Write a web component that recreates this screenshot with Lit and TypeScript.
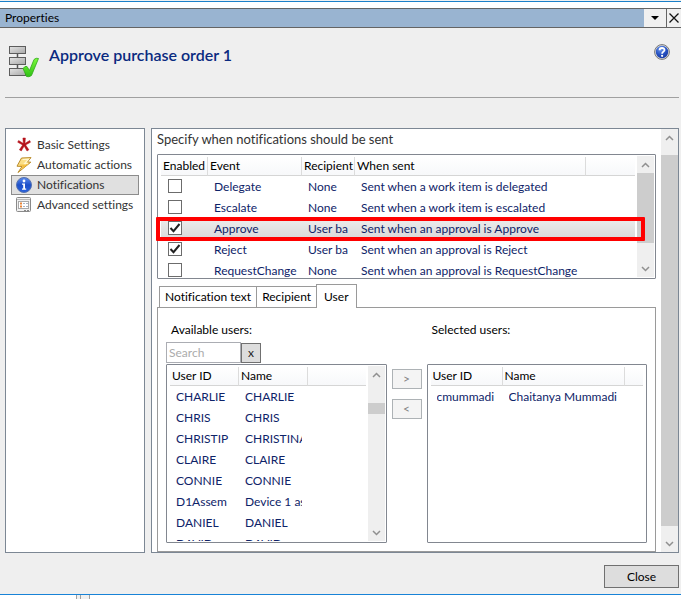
import { LitElement, html, css, svg, nothing } from "lit";
import { customElement, property, state } from "lit/decorators.js";
import { classMap } from "lit/directives/class-map.js";

interface NotificationEvent {
  name: string;
  recipient: string;
  when: string;
  enabled: boolean;
}

interface User {
  id: string;
  name: string;
}

const base = css`
  * {
    box-sizing: border-box;
  }
  button,
  input {
    font: inherit;
    font-variant-ligatures: none;
    color: inherit;
    margin: 0;
    border-radius: 0;
  }
`;

@customElement("scroll-bar")
export class ScrollBar extends LitElement {
  /** Share of the track above the thumb, in percent. */
  @property({ type: Number }) start = 0;
  /** Share of the track that the thumb fills, in percent. */
  @property({ type: Number }) size = 50;

  static styles = [
    base,
    css`
      :host {
        display: flex;
        flex-direction: column;
        flex: none;
        width: 17px;
        background: #efefef;
      }
      .arrow {
        flex: none;
        height: 17px;
        display: flex;
        align-items: center;
        justify-content: center;
      }
      :host([large]) .track {
        margin: 9px 0;
      }
      .track {
        flex: 1;
        min-height: 0;
      }
      .thumb {
        background: #cdcdcd;
      }
      path {
        fill: none;
        stroke: #909090;
        stroke-width: 1.5;
      }
    `,
  ];

  render() {
    return html`
      <div class="arrow"><svg width="9" height="6"><path d="M1 5L4.5 1.5L8 5" /></svg></div>
      <div class="track">
        <div style="height:${this.start}%"></div>
        <div class="thumb" style="height:${this.size}%"></div>
      </div>
      <div class="arrow"><svg width="9" height="6"><path d="M1 1L4.5 4.5L8 1" /></svg></div>
    `;
  }
}

const stepsIcon = svg`
  <svg width="32" height="34" viewBox="0 0 32 34" aria-hidden="true">
    <defs>
      <linearGradient id="box" x1="0" y1="0" x2="1" y2="1">
        <stop offset="0" stop-color="#e4e4e4" /><stop offset="1" stop-color="#a8a8a8" />
      </linearGradient>
      <linearGradient id="tick" x1="0" y1="0" x2="0" y2="1">
        <stop offset="0" stop-color="#7dfb3c" /><stop offset="1" stop-color="#2fc015" />
      </linearGradient>
    </defs>
    <path d="M9.500 9V24" stroke="#555" stroke-width="1.500" />
    <g fill="url(#box)" stroke="#5c5c5c">
      <rect x="1.500" y="2.500" width="16" height="7" />
      <rect x="1.500" y="13.500" width="16" height="7" />
      <rect x="1.500" y="24.500" width="16" height="7" />
    </g>
    <path d="M15 24.500Q17 21.500 19 22.500L21.500 26.500L26 15.500Q28 13.500 30.500 14.500L23.500 31.500Q21 33.500 18.500 32.500Z"
      fill="url(#tick)" stroke="#31a81c" stroke-width=".8" stroke-linejoin="round" />
  </svg>`;

const helpIcon = svg`
  <svg width="16" height="16" viewBox="0 0 16 16" aria-hidden="true">
    <defs>
      <radialGradient id="help" cx=".4" cy=".25" r=".8">
        <stop offset="0" stop-color="#6f9af0" /><stop offset=".6" stop-color="#2550c0" /><stop offset="1" stop-color="#1a3aa0" />
      </radialGradient>
    </defs>
    <circle cx="8" cy="8" r="7.400" fill="#ddd" stroke="#777" stroke-width="1" />
    <circle cx="8" cy="8" r="6.200" fill="url(#help)" />
    <path d="M5.600 6.300C5.600 3.300 10.500 3.300 10.500 6C10.500 7.700 8.100 7.600 8.100 9.700" fill="none" stroke="#fff" stroke-width="1.800" />
    <circle cx="8.100" cy="11.800" r="1.100" fill="#fff" />
  </svg>`;

const asterisk = svg`
  <svg width="16" height="16" viewBox="0 0 16 16" aria-hidden="true">
    <g fill="#b5121b" stroke="#b5121b" stroke-width=".5" stroke-linejoin="round">
      <path d="M6.900 1H9.400L8.800 8H7.500Z" />
      <path d="M1.700 5.200L2.600 3.500L8.700 7.300L8 8.700Z" />
      <path d="M14.500 5.200L13.700 3.500L7.500 7.300L8.200 8.700Z" />
      <path d="M7.300 7L8.800 7.900L5.300 14L3.400 12.800Z" />
      <path d="M9 7L7.500 7.900L11 14L12.900 12.800Z" />
    </g>
  </svg>`;

const bolt = svg`
  <svg width="16" height="16" viewBox="0 0 16 16" aria-hidden="true">
    <path d="M5.500 1L15 .6L11.500 5L14.800 5.200L2 15.500L6 9.500L1 9.200Z" fill="#fbdf86" stroke="#b98b2c" stroke-linejoin="round" />
    <path d="M6.500 2.500L12.500 2.200L8.600 6.500L12 6.700" fill="none" stroke="#fff6cf" stroke-width="1.200" />
    <path d="M11.500 7L6 11.500L8 8.300L3.500 8" fill="none" stroke="#f3bc3e" stroke-width="1.200" />
  </svg>`;

const info = svg`
  <svg width="16" height="16" viewBox="0 0 16 16" aria-hidden="true">
    <defs>
      <linearGradient id="info" x1="0" y1="0" x2="0" y2="1">
        <stop offset="0" stop-color="#5b8cf0" /><stop offset=".5" stop-color="#1d4fc8" /><stop offset="1" stop-color="#2a63dd" />
      </linearGradient>
    </defs>
    <circle cx="8" cy="8" r="7.500" fill="url(#info)" stroke="#5672ae" />
    <circle cx="8" cy="4" r="1.400" fill="#fff" />
    <path d="M6 6.500H9V11.500H10.200V12.700H6V11.500H7.200V7.700H6Z" fill="#fff" />
  </svg>`;

const form = svg`
  <svg width="16" height="16" viewBox="0 0 16 16" aria-hidden="true">
    <rect x=".5" y=".5" width="14" height="14" rx="1" fill="#f0f0f0" stroke="#8a8a8a" />
    <path d="M1 2.500H14" stroke="#b9b9b9" />
    <rect x="2.500" y="4.500" width="10" height="7" fill="#fff" stroke="#a8a8a8" />
    <path d="M4 6.500H6M4 9.500H6" stroke="#e8863a" stroke-width="2" />
    <path d="M7 6.500H9M10 6.500H12M7 9.500H9M10 9.500H12" stroke="#a9b4c4" />
    <path d="M8 13.500H10M11 13.500H13" stroke="#888" />
  </svg>`;

@customElement("app-root")
export class AppRoot extends LitElement {
  @state() private section = "Notifications";
  @state() private tab = "User";

  private sections = [
    { label: "Basic Settings", icon: asterisk },
    { label: "Automatic actions", icon: bolt },
    { label: "Notifications", icon: info },
    { label: "Advanced settings", icon: form },
  ];

  private tabs = ["Notification text", "Recipient", "User"];

  private events: NotificationEvent[] = [
    { name: "Delegate", recipient: "None", when: "Sent when a work item is delegated", enabled: false },
    { name: "Escalate", recipient: "None", when: "Sent when a work item is escalated", enabled: false },
    { name: "Approve", recipient: "User ba", when: "Sent when an approval is Approve", enabled: true },
    { name: "Reject", recipient: "User ba", when: "Sent when an approval is Reject", enabled: true },
    { name: "RequestChange", recipient: "None", when: "Sent when an approval is RequestChange", enabled: false },
  ];

  private available: User[] = [
    { id: "CHARLIE", name: "CHARLIE" },
    { id: "CHRIS", name: "CHRIS" },
    { id: "CHRISTIP", name: "CHRISTINA" },
    { id: "CLAIRE", name: "CLAIRE" },
    { id: "CONNIE", name: "CONNIE" },
    { id: "D1Assem", name: "Device 1 as" },
    { id: "DANIEL", name: "DANIEL" },
    { id: "DAVID", name: "DAVID" },
  ];

  private selected: User[] = [{ id: "cmummadi", name: "Chaitanya Mummadi" }];

  static styles = [
    base,
    css`
      :host {
        display: flex;
        flex-direction: column;
        height: 100vh;
        overflow: hidden;
        background: #fff;
        color: #000;
        font: 12px/16px Lato, "Open Sans", sans-serif;
        font-variant-ligatures: none;
      }
      .top-edge {
        flex: none;
        height: 8px;
        border-top: 1px solid #f0f0f0;
        background: linear-gradient(#1a7fc8 1px, #fff 1px);
      }
      .titlebar {
        flex: none;
        display: flex;
        height: 20px;
        border: solid #646464;
        border-width: 1px 0;
        background: #99b4d1;
      }
      .titlebar-text {
        flex: 1;
        padding: 1px 5px;
      }
      .title-button {
        width: 22px;
        padding: 0;
        border: 0;
        background: #f0f0f0;
        display: flex;
        align-items: center;
        justify-content: center;
      }
      .title-close {
        width: 15px;
        border-left: 1px solid #646464;
      }
      .dialog {
        flex: 1;
        min-height: 0;
        display: flex;
        flex-direction: column;
        background: #efefef;
        border-bottom: 1px solid #1883d7;
        padding: 0 2px 6px 5px;
      }
      .header {
        display: flex;
        align-items: flex-start;
        gap: 9px;
        padding: 16px 9px 19px 3px;
        border-bottom: 1px solid #a0a0a0;
      }
      .title {
        flex: 1;
        margin: 0;
        font-size: 16px;
        line-height: 22px;
        font-weight: 600;
        color: #0a2a80;
      }
      .help {
        padding: 0;
        border: 0;
        background: none;
        display: flex;
      }
      svg {
        display: block;
        flex: none;
      }
      .body {
        flex: 1;
        min-height: 0;
        display: flex;
        gap: 6px;
        margin-top: 30px;
      }
      .nav {
        flex: none;
        width: 140px;
        padding: 6px 5px;
        border: 1px solid #7c8794;
        background: #fff;
      }
      .nav-item {
        display: flex;
        align-items: center;
        gap: 5px;
        height: 20px;
        padding: 0 4px;
        border: 1px solid transparent;
        color: #333;
        text-decoration: none;
        white-space: nowrap;
      }
      .nav-item.current {
        background: #e0e0e0;
        border-color: #8c8c8c;
      }
      .panel {
        flex: 1;
        min-width: 0;
        display: flex;
        border: 1px solid #7c8794;
        background: #fff;
      }
      .content {
        flex: 1;
        min-width: 0;
        display: flex;
        flex-direction: column;
        padding: 0 5px;
      }
      .intro {
        margin: 0;
        padding-bottom: 5px;
        font-size: 13px;
        line-height: 20px;
        font-weight: 400;
        color: #333;
      }
      .list {
        position: relative;
        display: flex;
        min-height: 0;
        min-width: 0;
        padding: 1px;
        border: 1px solid #828790;
        border-radius: 1px;
        background: #fff;
      }
      .events {
        flex: none;
        height: 125px;
      }
      .viewport {
        flex: 1;
        min-width: 0;
        overflow: hidden;
        margin: 1px 2px 0;
      }
      table {
        width: 100%;
        table-layout: fixed;
        border-collapse: separate;
        border-spacing: 0;
      }
      th {
        height: 19px;
        padding: 0 0 0 2px;
        border-bottom: 1px solid #d5d5d5;
        border-right: 1px solid #dcdcdc;
        background: linear-gradient(#fff, #f7f8fa);
        font-weight: 400;
        text-align: left;
        white-space: nowrap;
      }
      th:last-child {
        border-right: 0;
      }
      td {
        height: 21px;
        padding: 0 6px;
        color: #0e2368;
        white-space: nowrap;
      }
      .clip {
        overflow: hidden;
      }
      .active td {
        background: linear-gradient(#ededed, #d9d9d9);
      }
      .w-enabled {
        width: 47px;
      }
      .w-event {
        width: 94px;
      }
      .w-recipient {
        width: 53px;
      }
      .w-when {
        width: 231px;
      }
      .w-id {
        width: 69px;
      }
      .w-selected-id {
        width: 72px;
      }
      .w-selected-name {
        width: 122px;
      }
      .event-name {
        padding-right: 0;
      }
      .check-cell {
        padding: 0 0 2px 7px;
      }
      .check {
        appearance: none;
        display: block;
        width: 14px;
        height: 14px;
        border: 1px solid #6c6c6c;
        background: #fff;
      }
      .check:checked {
        background: #fff
          url("data:image/svg+xml,%3Csvg xmlns='http://www.w3.org/2000/svg' viewBox='0 0 12 12'%3E%3Cpath d='M1.500 6L4.500 9.200L10.500 2' fill='none' stroke='%23212121' stroke-width='2'/%3E%3C/svg%3E");
      }
      .marker {
        position: absolute;
        top: 62px;
        left: -2px;
        right: 10px;
        height: 24px;
        border: 4px solid #f00;
        border-radius: 1px;
        pointer-events: none;
      }
      .tabs {
        flex: none;
        display: flex;
        align-items: flex-end;
        margin: 5px 2px 0;
      }
      .tab {
        height: 21px;
        padding: 0 5px;
        border: 1px solid #9a9a9a;
        border-bottom: 0;
        border-right: 0;
        background: #fff;
        white-space: nowrap;
      }
      .tab.open {
        position: relative;
        height: 24px;
        margin-bottom: -1px;
        padding: 0 7px;
        border-right: 1px solid #9a9a9a;
      }
      .tab-panel {
        flex: 1;
        min-height: 0;
        display: grid;
        grid-template-columns: minmax(0, 1fr) 30px minmax(0, 1fr);
        grid-template-rows: auto auto minmax(0, 1fr);
        column-gap: 5px;
        padding: 14px 8px 8px;
        border: 1px solid #9a9a9a;
      }
      .caption {
        padding: 0 5px 4px;
      }
      .caption-right {
        grid-column: 3;
      }
      .search {
        grid-row: 2;
        display: flex;
        align-items: flex-end;
        margin-bottom: 1px;
      }
      .search-box {
        width: 75px;
        height: 21px;
        padding: 0 2px;
        border: 1px solid #abadb3;
        background: #fff;
        outline: 0;
      }
      .search-box::placeholder {
        color: #ababab;
        opacity: 1;
      }
      .clear {
        width: 20px;
        height: 20px;
        padding: 0;
        border: 1px solid #707070;
        background: #ddd;
        color: #222;
      }
      .users {
        grid-row: 3;
      }
      .moves {
        grid-row: 3;
        grid-column: 2;
        display: flex;
        flex-direction: column;
        gap: 10px;
        padding-top: 5px;
      }
      .move {
        height: 20px;
        padding: 0;
        border: 1px solid #adb2b5;
        background: #f4f4f4;
        color: #838383;
        line-height: 16px;
      }
      .footer {
        flex: none;
        display: flex;
        justify-content: flex-end;
        padding-top: 12px;
      }
      .close {
        width: 75px;
        height: 23px;
        padding: 0;
        border: 1px solid #707070;
        background: #ddd;
      }
      .bottom-edge {
        flex: none;
        height: 4px;
        display: flex;
        padding-left: 76px;
      }
      .splitter {
        width: 14px;
        border: solid #a0a0a0;
        border-width: 0 1px;
        background: linear-gradient(90deg, #f0f0f0 3px, #a0a0a0 3px, #a0a0a0 4px, #f0f0f0 4px);
      }
    `,
  ];

  private renderUsers(users: User[], idClass: string, nameClass: string, bar: unknown) {
    return html`
      <div class="list users">
        <div class="viewport">
          <table>
            <thead>
              <tr>
                <th class=${idClass} scope="col">User ID</th>
                <th class=${nameClass} scope="col">Name</th>
                <th></th>
              </tr>
            </thead>
            <tbody>
              ${users.map(
                (user) => html`<tr>
                  <td><div class="clip">${user.id}</div></td>
                  <td><div class="clip">${user.name}</div></td>
                  <td></td>
                </tr>`
              )}
            </tbody>
          </table>
        </div>
        ${bar}
      </div>
    `;
  }

  render() {
    return html`
      <div class="top-edge"></div>
      <div class="titlebar">
        <div class="titlebar-text">Properties</div>
        <button class="title-button" aria-label="Window menu">
          <svg width="8" height="4"><path d="M0 0H8L4 4Z" /></svg>
        </button>
        <button class="title-button title-close" aria-label="Close window">
          <svg width="10" height="10"><path d="M.5 .5L9.500 9.500M9.500 .5L.5 9.500" stroke="#111" stroke-width="1.300" /></svg>
        </button>
      </div>
      <main class="dialog">
        <header class="header">
          ${stepsIcon}
          <h1 class="title">Approve purchase order 1</h1>
          <button class="help" aria-label="Help">${helpIcon}</button>
        </header>
        <div class="body">
          <nav class="nav">
            ${this.sections.map(
              (item) => html`<a
                href="#"
                class=${classMap({ "nav-item": true, current: item.label === this.section })}
                @click=${(e: Event) => {
                  e.preventDefault();
                  this.section = item.label;
                }}
                >${item.icon}<span>${item.label}</span></a
              >`
            )}
          </nav>
          <section class="panel">
            <div class="content">
              <h2 class="intro">Specify when notifications should be sent</h2>
              <div class="list events">
                <div class="viewport">
                  <table>
                    <thead>
                      <tr>
                        <th class="w-enabled" scope="col">Enabled</th>
                        <th class="w-event" scope="col">Event</th>
                        <th class="w-recipient" scope="col">Recipient</th>
                        <th class="w-when" scope="col">When sent</th>
                        <th></th>
                      </tr>
                    </thead>
                    <tbody>
                      ${this.events.map(
                        (row) => html`<tr class=${row.name === "Approve" ? "active" : nothing}>
                          <td class="check-cell">
                            <input class="check" type="checkbox" aria-label="Enable ${row.name}" .checked=${row.enabled} />
                          </td>
                          <td class="event-name">${row.name}</td>
                          <td><div class="clip">${row.recipient}</div></td>
                          <td>${row.when}</td>
                          <td></td>
                        </tr>`
                      )}
                    </tbody>
                  </table>
                </div>
                <scroll-bar start="0" size="80"></scroll-bar>
                <div class="marker"></div>
              </div>
              <div class="tabs" role="tablist">
                ${this.tabs.map(
                  (name) => html`<button
                    role="tab"
                    class=${classMap({ tab: true, open: name === this.tab })}
                    aria-selected=${name === this.tab}
                    @click=${() => (this.tab = name)}
                  >
                    ${name}
                  </button>`
                )}
              </div>
              <div class="tab-panel" role="tabpanel">
                <div class="caption">Available users:</div>
                <div class="caption caption-right">Selected users:</div>
                <div class="search">
                  <input class="search-box" type="text" placeholder="Search" aria-label="Search users" />
                  <button class="clear" aria-label="Clear search">x</button>
                </div>
                ${this.renderUsers(
                  this.available,
                  "w-id",
                  "w-id",
                  html`<scroll-bar start="14" size="8"></scroll-bar>`
                )}
                <div class="moves">
                  <button class="move" aria-label="Add user">&gt;</button>
                  <button class="move" aria-label="Remove user">&lt;</button>
                </div>
                ${this.renderUsers(this.selected, "w-selected-id", "w-selected-name", nothing)}
              </div>
            </div>
            <scroll-bar large start="0" size="100"></scroll-bar>
          </section>
        </div>
        <div class="footer"><button class="close">Close</button></div>
      </main>
      <div class="bottom-edge"><div class="splitter"></div></div>
    `;
  }
}
